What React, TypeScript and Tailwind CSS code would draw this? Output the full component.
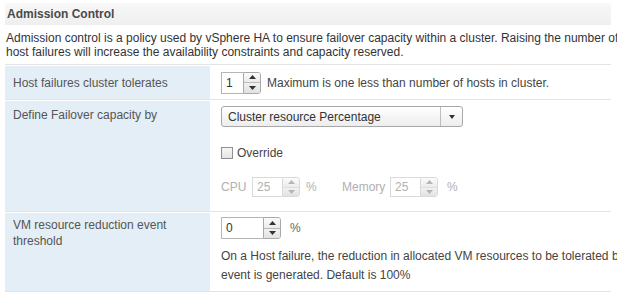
import React from "react";

const font = { fontFamily: '"Liberation Sans", Arial, sans-serif' };

const Spinner: React.FC<{ value: string; inputW: string; disabled?: boolean; h?: string }> = ({
  value,
  inputW,
  disabled,
  h = "h-[22px]",
}) => {
  const tri = disabled ? "text-[#b5b5b5]" : "text-[#333]";
  return (
    <div className={`flex ${h}`}>
      <div
        className={`${inputW} border border-r-0 ${
          disabled ? "border-[#d9d9d9] text-[#b0b0b0]" : "border-[#b5b5b5] text-[#333]"
        } bg-white flex items-center pl-[4px] text-[12px]`}
      >
        {value}
      </div>
      <div
        className={`w-[18px] flex flex-col border rounded-r-[3px] overflow-hidden ${
          disabled ? "border-[#d9d9d9]" : "border-[#a9a9a9]"
        }`}
      >
        <div
          className={`flex-1 flex items-center justify-center bg-gradient-to-b from-[#fbfbfb] to-[#ececec] border-b ${
            disabled ? "border-[#dedede]" : "border-[#b9b9b9]"
          }`}
        >
          <svg width="7" height="4" viewBox="0 0 7 4" className={tri}>
            <path d="M0 4 L3.5 0 L7 4 Z" fill="currentColor" />
          </svg>
        </div>
        <div className="flex-1 flex items-center justify-center bg-gradient-to-b from-[#f1f1f1] to-[#e2e2e2]">
          <svg width="7" height="4" viewBox="0 0 7 4" className={tri}>
            <path d="M0 0 L7 0 L3.5 4 Z" fill="currentColor" />
          </svg>
        </div>
      </div>
    </div>
  );
};

export default function App() {
  return (
    <div className="w-[617px] h-[298px] overflow-hidden bg-white" style={font}>
      <div className="ml-[5px] w-[606px] text-[12px]">
        <div className="mt-[3px] h-[22px] flex items-center pl-[2px] font-bold text-[#4a4a4a] bg-gradient-to-b from-[#f8f8f8] to-[#efefef]">
          Admission Control
        </div>

        <p className="mt-[6px] leading-[14px] text-[#333] whitespace-nowrap pl-[1px]">
          Admission control is a policy used by vSphere HA to ensure failover capacity within a cluster. Raising the number of
          <br />
          host failures will increase the availability constraints and capacity reserved.
        </p>

        <div className="mt-[5px] border-b border-[#e3e3e3]">
          {/* row 1 */}
          <div className="border-t border-[#e3e3e3] pt-px grid grid-cols-[205px_1fr]">
            <div className="bg-[#e4eef6] h-[33px] flex items-center pl-[8px] text-[#555]">
              Host failures cluster tolerates
            </div>
            <div className="flex items-center gap-[6px] pl-[11px] text-[#444] whitespace-nowrap">
              <Spinner value="1" inputW="w-[22px]" />
              <span>Maximum is one less than number of hosts in cluster.</span>
            </div>
          </div>

          {/* row 2 */}
          <div className="border-t border-[#e3e3e3] pt-px grid grid-cols-[205px_1fr]">
            <div className="bg-[#e4eef6] h-[110px] pl-[8px] pt-[5px] text-[#555]">
              Define Failover capacity by
            </div>
            <div className="pl-[11px] pt-[5px] flex flex-col">
              <div className="w-[242px] h-[21px] flex border border-[#a8a8a8] rounded-[3px] bg-gradient-to-b from-[#ffffff] to-[#ededed]">
                <div className="flex-1 flex items-center pl-[6px] text-[#333]">Cluster resource Percentage</div>
                <div className="w-[22px] border-l border-[#bdbdbd] flex items-center justify-center">
                  <svg width="6" height="4" viewBox="0 0 6 4">
                    <path d="M0 0 L6 0 L3 4 Z" fill="#333" />
                  </svg>
                </div>
              </div>
              <div className="mt-[17px] flex items-center gap-[4px] text-[#444]">
                <div className="w-[12px] h-[12px] border border-[#8f8f8f] bg-gradient-to-b from-[#f6f6f6] to-[#e4e4e4]" />
                <span>Override</span>
              </div>
              <div className="mt-[15px] flex items-center text-[#b0b0b0]">
                <span className="w-[31px]">CPU</span>
                <Spinner value="25" inputW="w-[30px]" disabled h="h-[20px]" />
                <span className="ml-[6px] w-[36px]">%</span>
                <span className="w-[48px]">Memory</span>
                <Spinner value="25" inputW="w-[30px]" disabled h="h-[20px]" />
                <span className="ml-[9px]">%</span>
              </div>
            </div>
          </div>

          {/* row 3 */}
          <div className="border-t border-[#e3e3e3] pt-px grid grid-cols-[205px_1fr]">
            <div className="bg-[#e4eef6] h-[78px] pl-[8px] pt-[4px] leading-[16px] text-[#555]">
              VM resource reduction event
              <br />
              threshold
            </div>
            <div className="pl-[11px] pt-[4px] flex flex-col text-[#444]">
              <div className="flex items-center gap-[9px]">
                <Spinner value="0" inputW="w-[42px]" />
                <span className="text-[#666]">%</span>
              </div>
              <p className="mt-[8px] leading-[19px] whitespace-nowrap">
                On a Host failure, the reduction in allocated VM resources to be tolerated before an
                <br />
                event is generated. Default is 100%
              </p>
            </div>
          </div>
        </div>
      </div>
    </div>
  );
}
